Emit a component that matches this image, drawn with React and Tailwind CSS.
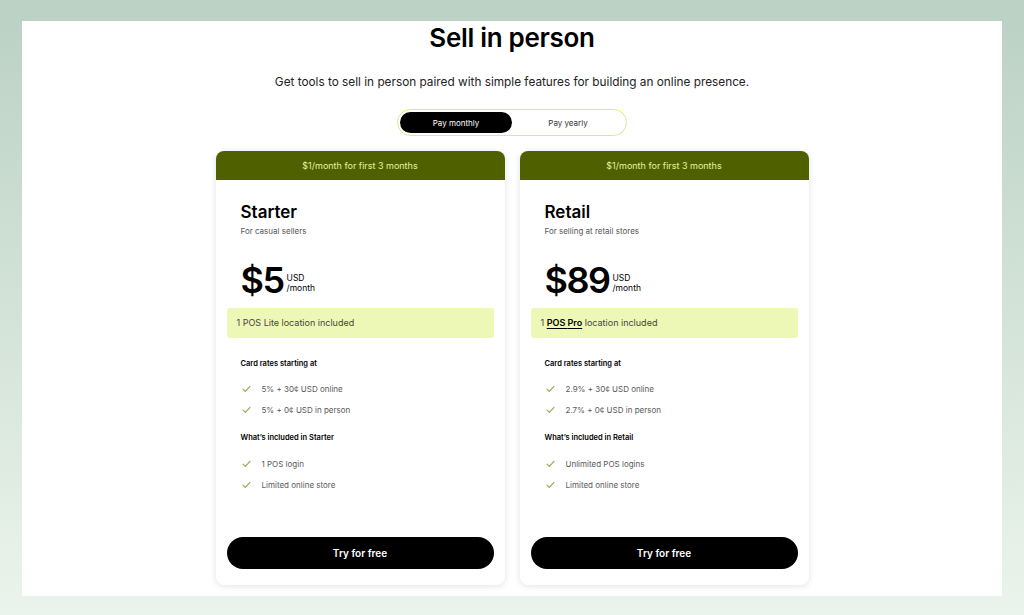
import React from 'react';

const plans = [
    {
        name: 'Starter',
        blurb: 'For casual sellers',
        price: '$5',
        pos: 'Lite',
        posLink: false,
        rates: ['5% + 30¢ USD online', '5% + 0¢ USD in person'],
        included: ['1 POS login', 'Limited online store'],
    },
    {
        name: 'Retail',
        blurb: 'For selling at retail stores',
        price: '$89',
        pos: 'Pro',
        posLink: true,
        rates: ['2.9% + 30¢ USD online', '2.7% + 0¢ USD in person'],
        included: ['Unlimited POS logins', 'Limited online store'],
    },
];

const Check = () => (
    <svg width="9" height="8" viewBox="0 0 9 8" fill="none" className="shrink-0">
        <path d="M1 4.2 L3.4 6.4 L8 1.4" stroke="#86b04a" strokeWidth="1.1" strokeLinecap="round" strokeLinejoin="round" />
    </svg>
);

const Feature = ({ text }) => (
    <li className="flex items-center gap-[11px] pl-[1px] h-[21px] text-[8px] text-[#5a5a5a]">
        <Check />
        <span>{text}</span>
    </li>
);

const PlanCard = ({ plan }) => (
    <div className="w-[289px] h-[434px] flex flex-col rounded-[8px] bg-white shadow-[0_1px_6px_rgba(0,0,0,0.12)] overflow-hidden">
        <div className="h-[29px] bg-[#4f6000] flex items-center justify-center text-[9px] text-[#e4f3a6]">
            $1/month for first 3 months
        </div>
        <div className="flex-1 flex flex-col px-[11px] pb-[16px]">
            <div className="px-[14px]">
                <h3 className="mt-[21px] text-[17px] font-semibold leading-[22px] text-black">{plan.name}</h3>
                <p className="mt-[2px] text-[8px] leading-[12px] text-[#555]">{plan.blurb}</p>
                <div className="mt-[23px] h-[40px] flex items-center gap-[3px]">
                    <span className="text-[36px] font-semibold leading-[40px] tracking-[-1.5px] text-black">{plan.price}</span>
                    <span className="text-[8.5px] leading-[10px] text-black mt-[5px]">USD<br />/month</span>
                </div>
            </div>
            <div className="mt-[8px] h-[30px] rounded-[3px] bg-[#eef8b6] flex items-center px-[10px] text-[9px] text-[#444]">
                {plan.posLink ? (
                    <span>1 <span className="font-semibold text-black underline underline-offset-2">POS {plan.pos}</span> location included</span>
                ) : (
                    <span>1 POS {plan.pos} location included</span>
                )}
            </div>
            <div className="px-[14px]">
                <p className="mt-[20px] text-[7.5px] leading-[11px] font-semibold text-black">Card rates starting at</p>
                <ul className="mt-[9px]">
                    {plan.rates.map((r) => <Feature key={r} text={r} />)}
                </ul>
                <p className="mt-[12px] text-[7.5px] leading-[11px] font-semibold text-black">What’s included in {plan.name}</p>
                <ul className="mt-[10px]">
                    {plan.included.map((r) => <Feature key={r} text={r} />)}
                </ul>
            </div>
            <button className="mt-auto h-[32px] w-full rounded-full bg-black text-white text-[10px] font-semibold">
                Try for free
            </button>
        </div>
    </div>
);

const App = () => {
    return (
        <div className="min-h-[615px] w-full bg-gradient-to-b from-[#bbd1c4] to-[#ebf4ec] pt-[21px] pb-[19px] px-[22px]" style={{ fontFamily: 'Inter, "Noto Sans", sans-serif' }}>
            <div className="h-[575px] bg-white flex flex-col items-center">
                <h1 className="text-[26px] font-semibold leading-[34px] tracking-[-0.3px] text-black">Sell in person</h1>
                <p className="mt-[19px] text-[11.8px] leading-[16px] text-[#222]">
                    Get tools to sell in person paired with simple features for building an online presence.
                </p>
                <div className="mt-[19px] w-[230px] h-[27px] rounded-full border-[1.5px] border-[#d5ec8c] flex items-center p-[2px]">
                    <div className="w-[112px] h-[21px] rounded-full bg-black text-white text-[8px] flex items-center justify-center">Pay monthly</div>
                    <div className="flex-1 text-[8px] text-[#333] text-center">Pay yearly</div>
                </div>
                <div className="mt-[15px] flex gap-[15px]">
                    {plans.map((p) => <PlanCard key={p.name} plan={p} />)}
                </div>
            </div>
        </div>
    );
};

export default App;
